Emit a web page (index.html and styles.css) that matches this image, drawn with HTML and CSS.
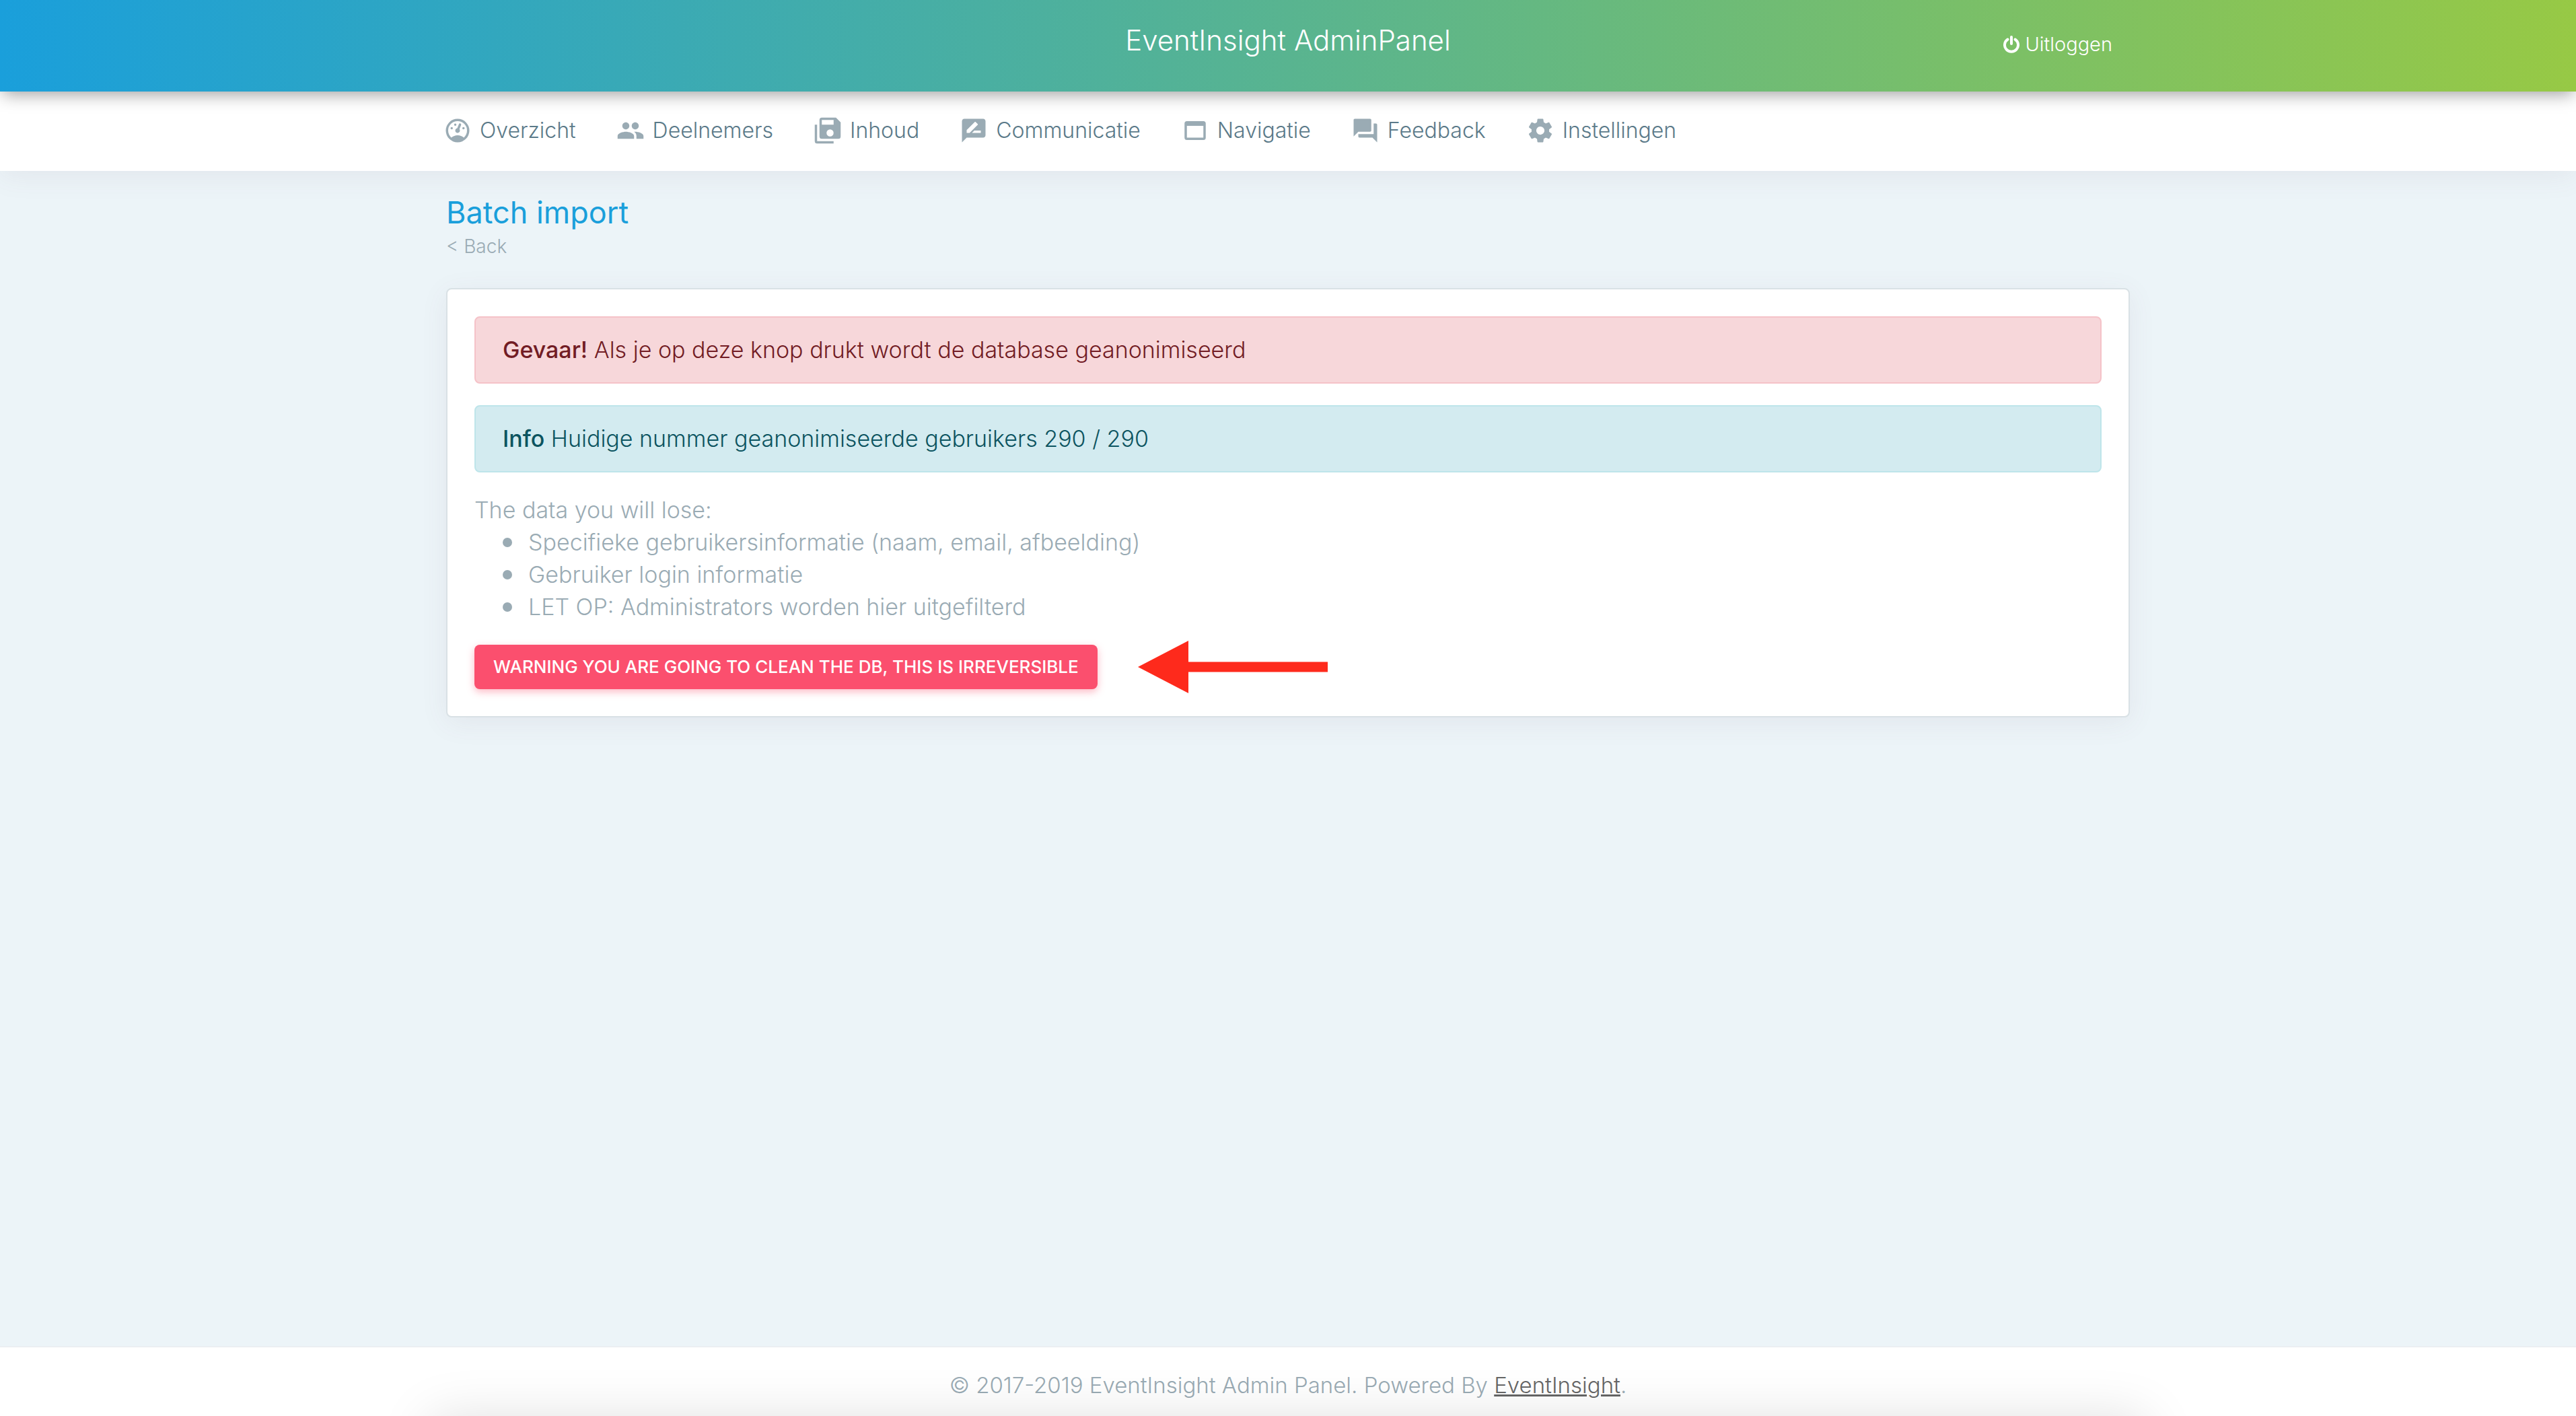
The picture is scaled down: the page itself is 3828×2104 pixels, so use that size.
FILE: index.html
```html
<!DOCTYPE html>
<html lang="nl">
<head>
<meta charset="utf-8">
<meta name="viewport" content="width=device-width, initial-scale=1">
<title>EventInsight AdminPanel</title>
<link rel="stylesheet" href="styles.css">
</head>
<body>
<header class="topbar">
  <div class="container topbar-inner">
    <span class="brand">EventInsight AdminPanel</span>
    <a class="logout" href="#"><svg class="logout-icon" viewBox="0 0 24 26" aria-hidden="true"><path d="M12 2v10M6.500 5.500a10 10 0 1 0 11 0" fill="none" stroke="currentColor" stroke-width="4" stroke-linecap="round"/></svg>Uitloggen</a>
  </div>
</header>
<nav class="menu">
  <div class="container menu-inner">
    <a class="menu-item" href="#"><svg class="icon" viewBox="0 0 24 24" aria-hidden="true"><path d="M12 2A10 10 0 0 0 2 12a10 10 0 0 0 10 10 10 10 0 0 0 10-10A10 10 0 0 0 12 2m0 2a8 8 0 0 1 8 8c0 2.400-1 4.500-2.700 6-1.400-1.300-3.300-2-5.300-2s-3.800.700-5.300 2C5 16.500 4 14.400 4 12a8 8 0 0 1 8-8m2 1.890c-.38.010-.74.260-.9.650l-1.290 3.230-.1.230c-.71.130-1.300.6-1.570 1.260-.41 1.030.09 2.190 1.120 2.600s2.190-.09 2.600-1.120c.26-.66.140-1.420-.29-1.980l.1-.26 1.290-3.210.01-.03c.2-.51-.05-1.090-.56-1.300-.13-.05-.26-.07-.41-.07M10 6a1 1 0 0 0-1 1 1 1 0 0 0 1 1 1 1 0 0 0 1-1 1 1 0 0 0-1-1M7 9a1 1 0 0 0-1 1 1 1 0 0 0 1 1 1 1 0 0 0 1-1 1 1 0 0 0-1-1m10 0a1 1 0 0 0-1 1 1 1 0 0 0 1 1 1 1 0 0 0 1-1 1 1 0 0 0-1-1z"/></svg>Overzicht</a>
    <a class="menu-item" href="#"><svg class="icon" viewBox="0 0 24 24" aria-hidden="true"><path d="M16 11c1.660 0 2.990-1.340 2.990-3S17.660 5 16 5s-3 1.340-3 3 1.340 3 3 3m-8 0c1.660 0 2.990-1.340 2.990-3S9.660 5 8 5 5 6.340 5 8s1.340 3 3 3m0 2c-2.330 0-7 1.170-7 3.500V19h14v-2.500c0-2.330-4.670-3.500-7-3.500m8 0c-.29 0-.62.020-.97.050 1.160.840 1.970 1.970 1.970 3.450V19h6v-2.500c0-2.330-4.670-3.500-7-3.500z"/></svg>Deelnemers</a>
    <a class="menu-item" href="#"><svg class="icon" viewBox="0 0 24 24" aria-hidden="true"><path d="M19 1H7a2 2 0 0 0-2 2v14a2 2 0 0 0 2 2h14a2 2 0 0 0 2-2V5l-4-4zm-5 16a3 3 0 1 1 0-6 3 3 0 0 1 0 6m3-10H7V3h10zM1 7h2v14h14v2H3a2 2 0 0 1-2-2z"/></svg>Inhoud</a>
    <a class="menu-item" href="#"><svg class="icon" viewBox="0 0 24 24" aria-hidden="true"><path d="M20 2H4c-1.100 0-2 .9-2 2v18l4-4h14c1.100 0 2-.9 2-2V4c0-1.100-.9-2-2-2M6 14v-2.470l6.880-6.880c.2-.2.510-.2.710 0l1.770 1.770c.2.200.2.510 0 .710L8.470 14zm12 0h-7.500l2-2H18z"/></svg>Communicatie</a>
    <a class="menu-item" href="#"><svg class="icon" viewBox="0 0 24 24" aria-hidden="true"><path d="M19 4H5a2 2 0 0 0-2 2v12a2 2 0 0 0 2 2h14a2 2 0 0 0 2-2V6a2 2 0 0 0-2-2m0 14H5V8h14z"/></svg>Navigatie</a>
    <a class="menu-item" href="#"><svg class="icon" viewBox="0 0 24 24" aria-hidden="true"><path d="M21 6h-2v9H6v2c0 .55.450 1 1 1h11l4 4V7c0-.55-.45-1-1-1m-4 6V3c0-.55-.45-1-1-1H3c-.55 0-1 .45-1 1v14l4-4h10c.55 0 1-.45 1-1z"/></svg>Feedback</a>
    <a class="menu-item" href="#"><svg class="icon" viewBox="0 0 24 24" aria-hidden="true"><path d="M12 15.500A3.500 3.500 0 0 1 8.500 12 3.500 3.500 0 0 1 12 8.500a3.500 3.500 0 0 1 3.500 3.500 3.500 3.500 0 0 1-3.500 3.500m7.430-2.530c.04-.32.070-.64.070-.97s-.03-.66-.07-1l2.110-1.630c.19-.15.240-.42.120-.64l-2-3.460c-.12-.22-.39-.31-.61-.22l-2.490 1c-.52-.39-1.060-.73-1.690-.98l-.37-2.650A.506.506 0 0 0 14 2h-4c-.25 0-.46.180-.5.420l-.37 2.650c-.63.250-1.170.590-1.690.980l-2.490-1c-.22-.09-.49 0-.61.220l-2 3.460c-.13.220-.07.490.120.640L4.570 11c-.04.340-.07.670-.07 1s.03.650.070.970l-2.110 1.660c-.19.150-.25.420-.12.640l2 3.460c.12.220.390.300.610.220l2.490-1.010c.52.400 1.060.740 1.690.990l.37 2.650c.04.240.250.420.500.420h4c.25 0 .46-.18.500-.42l.37-2.650c.63-.26 1.170-.59 1.690-.99l2.490 1.010c.22.080.490 0 .61-.22l2-3.460c.12-.22.070-.49-.12-.64z"/></svg>Instellingen</a>
  </div>
</nav>
<main class="container content">
  <h1 class="title">Batch import</h1>
  <a class="back" href="#">&lt; Back</a>
  <section class="card">
    <div class="alert alert-danger"><strong>Gevaar!</strong> Als je op deze knop drukt wordt de database geanonimiseerd</div>
    <div class="alert alert-info"><strong>Info</strong> Huidige nummer geanonimiseerde gebruikers 290 / 290</div>
    <div class="loss">
      <p class="loss-intro">The data you will lose:</p>
      <ul class="loss-list">
        <li>Specifieke gebruikersinformatie (naam, email, afbeelding)</li>
        <li>Gebruiker login informatie</li>
        <li>LET OP: Administrators worden hier uitgefilterd</li>
      </ul>
    </div>
    <div class="action">
      <button class="btn-danger" type="button">WARNING YOU ARE GOING TO CLEAN THE DB, THIS IS IRREVERSIBLE</button>
      <svg class="arrow" viewBox="0 0 282 78" aria-hidden="true"><path d="M0 39 75 0v31.500h207v15H75V78z" fill="#fe2a1c"/></svg>
    </div>
  </section>
</main>
<footer class="footer">
  <p class="footer-text">© 2017-2019 EventInsight Admin Panel. Powered By <a class="footer-link" href="#">EventInsight</a>.</p>
</footer>
</body>
</html>
```
FILE: styles.css
```css
* { box-sizing: border-box; }

body {
  margin: 0;
  min-height: 100vh;
  display: flex;
  flex-direction: column;
  background: #ecf4f8;
  color: #9aabb4;
  font-family: Inter, "Open Sans", sans-serif;
  font-weight: 350;
  font-size: 34px;
  line-height: 48px;
}

a { color: inherit; text-decoration: none; }

.container {
  width: 100%;
  max-width: 2502px;
  margin: 0 auto;
}

.topbar {
  position: relative;
  z-index: 2;
  background: linear-gradient(90deg, #1a9fdb, #97c945);
  box-shadow: 0 8px 24px -4px rgba(0, 0, 0, 0.38);
  color: #fff;
}

.topbar-inner {
  display: grid;
  grid-template-columns: 1fr auto 1fr;
  align-items: center;
  min-height: 136px;
  padding-bottom: 4px;
}

.brand {
  grid-column: 2;
  font-size: 42px;
  line-height: 56px;
  padding-bottom: 12px;
}

.logout {
  display: flex;
  align-items: center;
  justify-self: end;
  gap: 8px;
  padding-right: 26px;
  font-size: 29px;
}

.logout-icon { width: 24px; height: 26px; }

.menu {
  position: relative;
  z-index: 1;
  background: #fff;
  box-shadow: 0 8px 40px rgba(120, 80, 100, 0.08);
}

.menu-inner {
  display: flex;
  gap: 60px;
  min-height: 118px;
  align-items: center;
  padding-bottom: 2px;
}

.menu-item {
  display: flex;
  align-items: center;
  gap: 12px;
  color: #5b7a89;
  font-size: 32px;
}

.menu-item:first-child { margin-left: -4px; }

.icon { width: 42px; height: 42px; fill: #9aabb4; }

.content { flex: 1; padding: 32px 0 48px; }

.title {
  margin: 0;
  color: #1a9fdb;
  font-size: 45px;
  line-height: 60px;
  font-weight: 400;
}

.back {
  display: block;
  width: fit-content;
  font-size: 28px;
  line-height: 40px;
}

.card {
  margin-top: 42px;
  padding: 40px;
  display: flex;
  flex-direction: column;
  gap: 32px;
  background: #fff;
  border: 2px solid #d9e1e5;
  border-radius: 8px;
  box-shadow: 0 8px 40px rgba(120, 80, 100, 0.08);
}

.alert {
  padding: 24px 40px;
  border: 2px solid;
  border-radius: 8px;
}

.alert strong { font-weight: 500; }
.alert-danger { background: #f7d7da; border-color: #f5c2c8; color: #721c24; }
.alert-info { background: #d3ebf0; border-color: #bee5ea; color: #0c5460; }

.loss-intro { margin: 0; }
.loss-list { margin: 0; padding-left: 42px; list-style: none; }
.loss-list li { display: flex; align-items: center; gap: 24px; }

.loss-list li::before {
  content: "";
  width: 14px;
  height: 14px;
  border-radius: 50%;
  background: #9aabb4;
}

.action { display: flex; align-items: center; gap: 60px; }

.btn-danger {
  padding: 12px 28px;
  border: 0;
  border-radius: 8px;
  background: #fb4f6e;
  box-shadow: 0 4px 12px rgba(251, 79, 110, 0.4);
  color: #fff;
  font-family: inherit;
  font-size: 26px;
  font-weight: 500;
  line-height: 42px;
}

.arrow { width: 282px; height: 78px; margin: -6px 0; }

.footer {
  position: relative;
  overflow: hidden;
  padding: 38px 40px 28px;
  border-top: 2px solid #ebeff2;
  background: #fff;
  text-align: center;
}

.footer::after {
  content: "";
  position: absolute;
  top: 100%;
  left: 640px;
  right: 640px;
  height: 100px;
  box-shadow: 0 4px 80px rgba(0, 0, 0, 0.13);
}

.footer-text { margin: 0; font-size: 33px; line-height: 36px; }
.footer-link { color: #666; text-decoration: underline; }
```
